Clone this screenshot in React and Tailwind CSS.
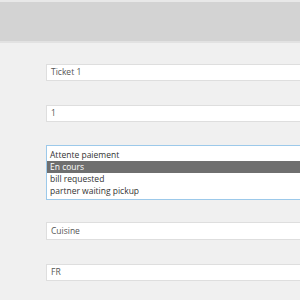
import React from 'react';

const options = ['Attente paiement', 'En cours', 'bill requested', 'partner waiting pickup'];

const Field = ({ value, className = '' }) => (
    <div className={`w-[300px] h-[17px] bg-white border border-[#dedede] flex items-center pl-[4px] text-[#555] ${className}`}>
        {value}
    </div>
);

export default function App() {
    return (
        <div className="w-[300px] h-[300px] overflow-hidden bg-[#f0f0f0] font-['Open_Sans',sans-serif] text-[8.5px]">
            {/* header bar */}
            <div className="h-[2px] bg-[#e8e8e8]" />
            <div className="h-[41px] bg-[#d3d3d3] border-b-2 border-[#e2e2e2]" />

            {/* form */}
            <div className="pl-[46px] pt-[21px] flex flex-col">
                <Field value="Ticket 1" />
                <Field value="1" className="mt-[24px]" />

                <div className="mt-[23px] w-[300px] h-[55px] bg-white border border-[#9cc9ea] pt-[3px] text-[#333]">
                    {options.map((o, i) => (
                        <div
                            key={o}
                            className={`h-[12px] leading-[12px] pl-[3px] ${i === 1 ? 'bg-[#6f6f6f] text-white' : ''}`}
                        >
                            {o}
                        </div>
                    ))}
                </div>

                <Field value="Cuisine" className="mt-[22px] h-[18px]" />
                <Field value="FR" className="mt-[24px]" />
            </div>
        </div>
    );
}
